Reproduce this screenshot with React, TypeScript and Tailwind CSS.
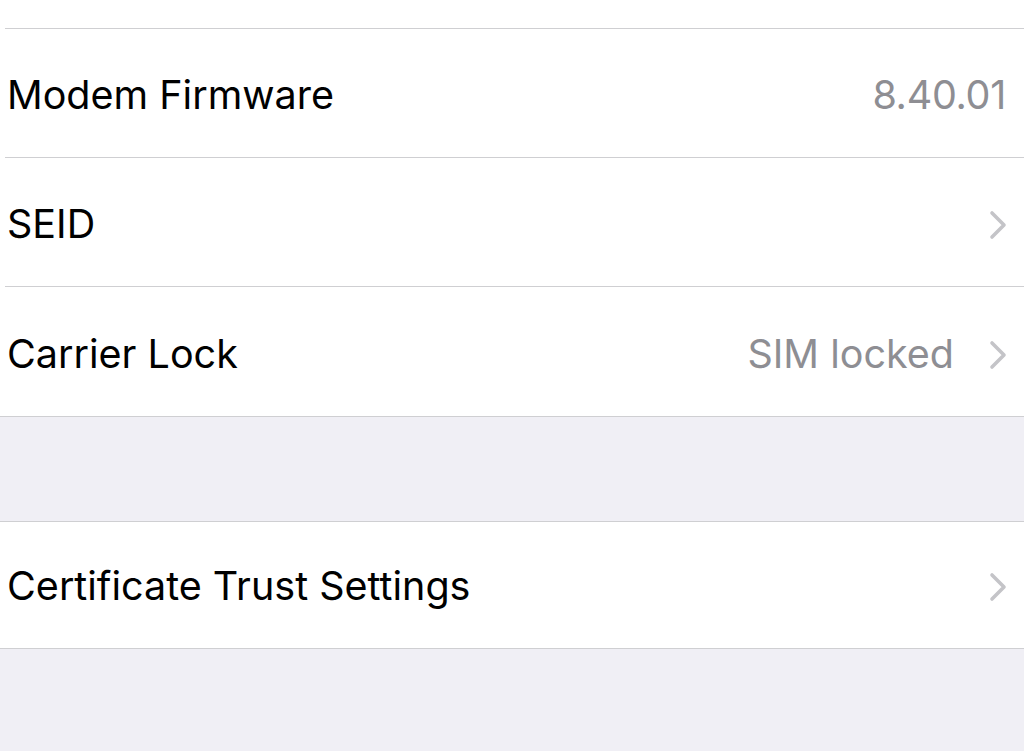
import React from 'react';

const font = { fontFamily: 'Inter, "Liberation Sans", sans-serif' };

function Chevron() {
  return (
    <svg width="20" height="30" viewBox="0 0 20 30" className="shrink-0">
      <path d="M4 3 L16 15 L4 27" fill="none" stroke="#c4c4c8" strokeWidth="3.6" strokeLinecap="round" strokeLinejoin="round" />
    </svg>
  );
}

type Row = { label: string; value?: string; chevron?: boolean; mono?: boolean };

function SettingsRow({ row, last }: { row: Row; last?: boolean }) {
  return (
    <div className="flex h-[129px] items-stretch pl-[5px]">
      <div className={`flex flex-1 items-center pr-[16px] pt-[6px] ${last ? '' : 'border-b border-[#cfcfd2]'}`}>
        <span className="pl-[2px] text-[39.5px] text-black">{row.label}</span>
        <div className="ml-auto flex items-center gap-[34px]">
          {row.value && (
            <span className={`text-[39.5px] text-[#8e8e93] ${row.mono ? 'text-[38px] tracking-[-0.3px] pr-[2px]' : ''}`}>{row.value}</span>
          )}
          {row.chevron && <Chevron />}
        </div>
      </div>
    </div>
  );
}

export default function App() {
  const rows: Row[] = [
    { label: 'Modem Firmware', value: '8.40.01', mono: true },
    { label: 'SEID', chevron: true },
    { label: 'Carrier Lock', value: 'SIM locked', chevron: true },
  ];

  return (
    <div className="h-[751px] w-[1024px] overflow-hidden bg-[#f0eff5]" style={font}>
      <div className="bg-white border-b border-[#cfcfd2]">
        <div className="h-[29px] pl-[5px]">
          <div className="h-full border-b border-[#cfcfd2]" />
        </div>
        {rows.map((r, i) => (
          <SettingsRow key={r.label} row={r} last={i === rows.length - 1} />
        ))}
      </div>

      <div className="h-[104px]" />

      <div className="bg-white border-y border-[#cfcfd2]">
        <div className="flex h-[126px] items-center pl-[7px] pr-[16px] pt-[4px]">
          <span className="text-[39.5px] text-black">Certificate Trust Settings</span>
          <div className="ml-auto"><Chevron /></div>
        </div>
      </div>
    </div>
  );
}
